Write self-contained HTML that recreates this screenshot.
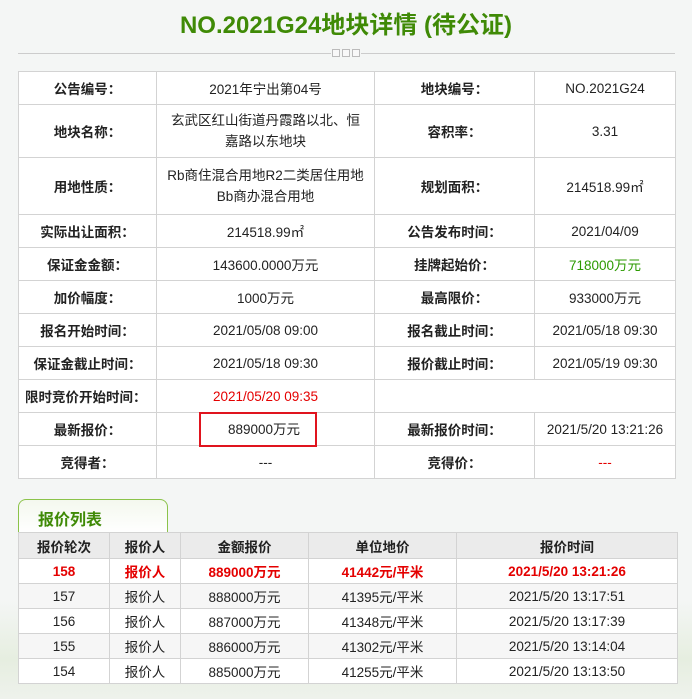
<!DOCTYPE html>
<html><head><meta charset="utf-8"><style>
*{margin:0;padding:0;box-sizing:border-box}
body{width:692px;height:699px;background:#f4f6f5;font-family:"Liberation Sans","Noto Sans CJK SC",sans-serif;font-size:13px;color:#222;position:relative;overflow:hidden}
.bgw{position:absolute;left:0;top:600px;width:692px;height:99px;background:linear-gradient(180deg,#f4f6f5,#e6eee0 60%,#eef2ec)}
h1{position:absolute;top:5px;left:0;width:692px;text-align:center;font-size:24px;color:#3f8a06;font-weight:bold}
.line{position:absolute;left:18px;top:53px;width:657px;height:1px;background:#ccc}
.sq{position:absolute;top:48px;left:331px;width:30px;height:10px;background:#f4f6f5;display:flex;gap:2px;justify-content:center}
.sq i{display:block;width:8px;height:8px;border:1px solid #bbb;background:#f8f8f8;margin-top:1px}
table{border-collapse:collapse;position:absolute;background:#fff;table-layout:fixed}
td,th{border:1px solid #d3d3d3;text-align:center;padding:0}
#t1{left:18px;top:71px;width:657px}
#t1 td{height:33px;font-size:13.5px}
#t1 td.l{font-weight:bold}
.red{color:#e40000}.grn{color:#2c9a00}
.rel{position:relative}
.box{position:absolute;left:42px;top:-1px;border:2px solid #e0141e;width:118px;height:35px;line-height:31px;padding-left:12px}
.tab{position:absolute;left:18px;top:499px;width:150px;height:34px;border:1px solid #8bc34a;border-bottom:none;border-radius:8px 8px 0 0;background:linear-gradient(#f4f8ee,#fff);color:#3f8a06;font-weight:bold;font-size:16px;padding:6px 0 0 19px}
#t2{left:18px;top:532px;width:659px}
#t2 th{background:#ebebeb;height:26px;font-size:13.5px}
#t2 td{height:25px;font-size:13.5px}
#t2 tr.r td{color:#e40000;font-weight:bold;background:#fff}
#t2 tr:nth-child(odd) td{background:#f6f6f6}
</style></head><body>
<div class="bgw"></div>
<h1>NO.2021G24地块详情 (待公证)</h1>
<div class="line"></div>
<div class="sq"><i></i><i></i><i></i></div>
<table id="t1">
<colgroup><col style="width:138px"><col style="width:218px"><col style="width:160px"><col style="width:141px"></colgroup>
<tr><td class="l">公告编号：</td><td>2021年宁出第04号</td><td class="l">地块编号：</td><td>NO.2021G24</td></tr>
<tr><td class="l" style="height:53px">地块名称：</td><td style="line-height:21px">玄武区红山街道丹霞路以北、恒<br>嘉路以东地块</td><td class="l">容积率：</td><td>3.31</td></tr>
<tr><td class="l" style="height:57px">用地性质：</td><td style="line-height:21px">Rb商住混合用地R2二类居住用地<br>Bb商办混合用地</td><td class="l">规划面积：</td><td>214518.99㎡</td></tr>
<tr><td class="l">实际出让面积：</td><td>214518.99㎡</td><td class="l">公告发布时间：</td><td>2021/04/09</td></tr>
<tr><td class="l">保证金金额：</td><td>143600.0000万元</td><td class="l">挂牌起始价：</td><td class="grn">718000万元</td></tr>
<tr><td class="l">加价幅度：</td><td>1000万元</td><td class="l">最高限价：</td><td>933000万元</td></tr>
<tr><td class="l">报名开始时间：</td><td>2021/05/08 09:00</td><td class="l">报名截止时间：</td><td>2021/05/18 09:30</td></tr>
<tr><td class="l">保证金截止时间：</td><td>2021/05/18 09:30</td><td class="l">报价截止时间：</td><td>2021/05/19 09:30</td></tr>
<tr><td class="l" style="text-align:left;padding-left:6px">限时竞价开始时间：</td><td class="red">2021/05/20 09:35</td><td colspan="2"></td></tr>
<tr><td class="l">最新报价：</td><td class="rel"><span class="box">889000万元</span></td><td class="l">最新报价时间：</td><td>2021/5/20 13:21:26</td></tr>
<tr><td class="l">竞得者：</td><td>---</td><td class="l">竞得价：</td><td style="color:#e40000">---</td></tr>
</table>
<div class="tab">报价列表</div>
<table id="t2">
<colgroup><col style="width:91px"><col style="width:71px"><col style="width:128px"><col style="width:148px"><col style="width:221px"></colgroup>
<tr><th>报价轮次</th><th>报价人</th><th>金额报价</th><th>单位地价</th><th>报价时间</th></tr>
<tr class="r"><td>158</td><td>报价人</td><td>889000万元</td><td>41442元/平米</td><td>2021/5/20 13:21:26</td></tr>
<tr><td>157</td><td>报价人</td><td>888000万元</td><td>41395元/平米</td><td>2021/5/20 13:17:51</td></tr>
<tr><td>156</td><td>报价人</td><td>887000万元</td><td>41348元/平米</td><td>2021/5/20 13:17:39</td></tr>
<tr><td>155</td><td>报价人</td><td>886000万元</td><td>41302元/平米</td><td>2021/5/20 13:14:04</td></tr>
<tr><td>154</td><td>报价人</td><td>885000万元</td><td>41255元/平米</td><td>2021/5/20 13:13:50</td></tr>
</table>
</body></html>
